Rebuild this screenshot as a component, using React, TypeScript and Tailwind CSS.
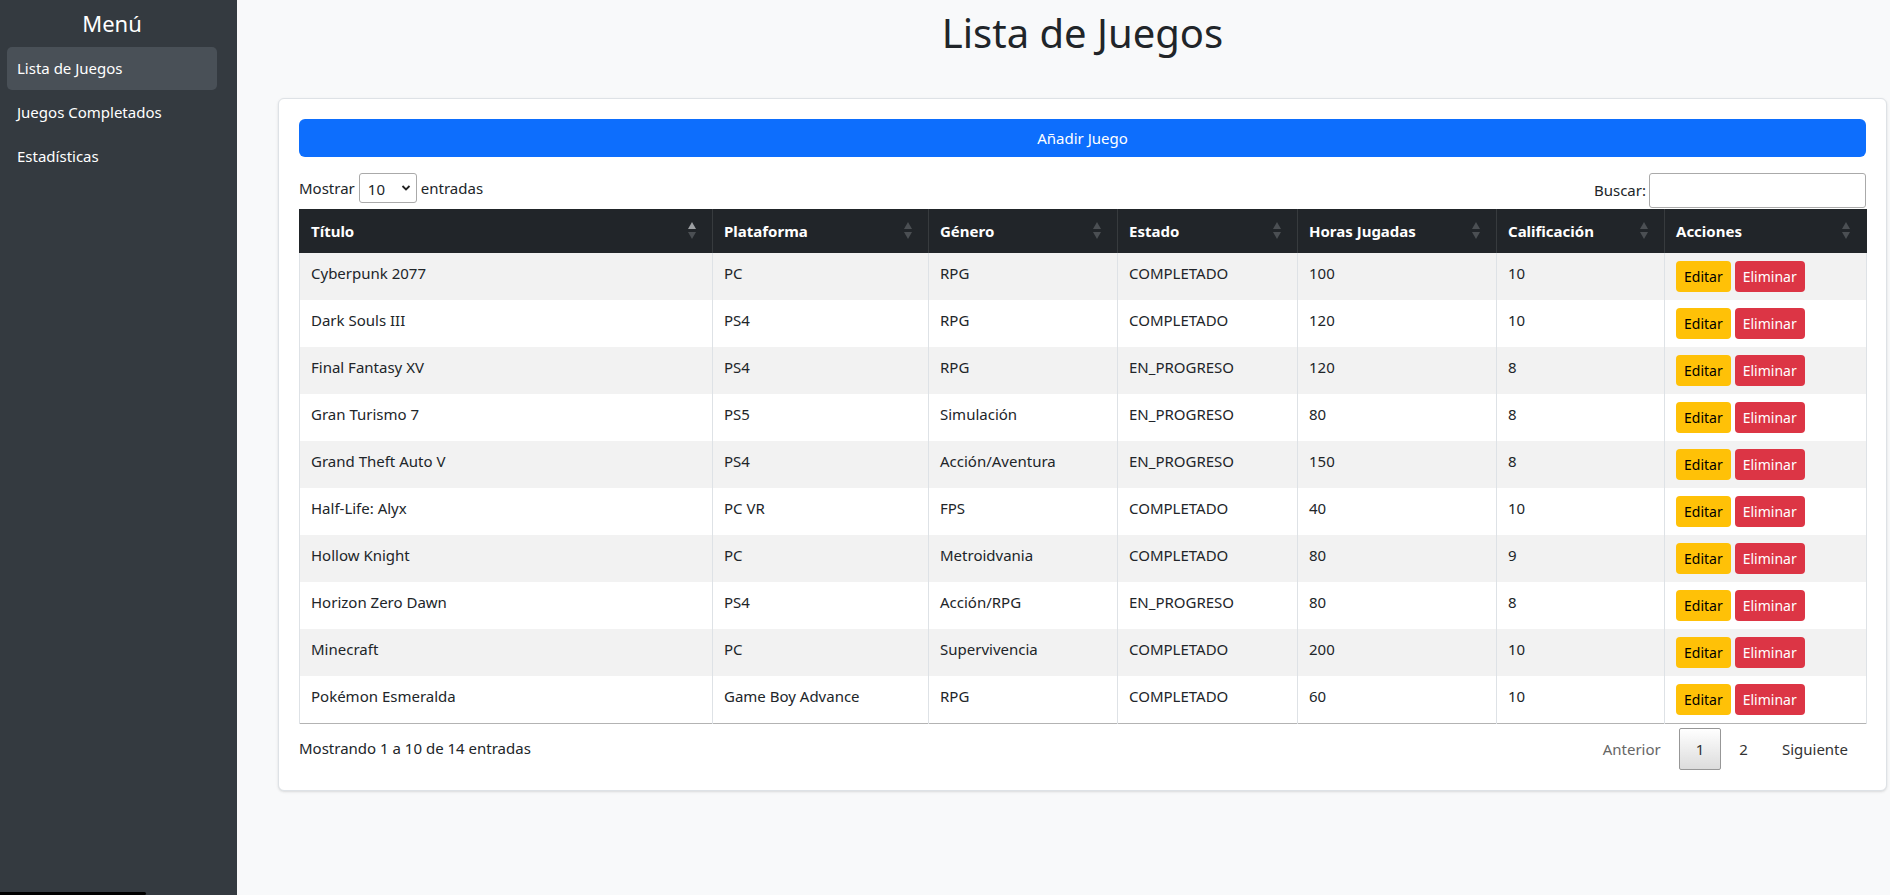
import React from "react";

const games = [
  ["Cyberpunk 2077", "PC", "RPG", "COMPLETADO", "100", "10"],
  ["Dark Souls III", "PS4", "RPG", "COMPLETADO", "120", "10"],
  ["Final Fantasy XV", "PS4", "RPG", "EN_PROGRESO", "120", "8"],
  ["Gran Turismo 7", "PS5", "Simulación", "EN_PROGRESO", "80", "8"],
  ["Grand Theft Auto V", "PS4", "Acción/Aventura", "EN_PROGRESO", "150", "8"],
  ["Half-Life: Alyx", "PC VR", "FPS", "COMPLETADO", "40", "10"],
  ["Hollow Knight", "PC", "Metroidvania", "COMPLETADO", "80", "9"],
  ["Horizon Zero Dawn", "PS4", "Acción/RPG", "EN_PROGRESO", "80", "8"],
  ["Minecraft", "PC", "Supervivencia", "COMPLETADO", "200", "10"],
  ["Pokémon Esmeralda", "Game Boy Advance", "RPG", "COMPLETADO", "60", "10"],
];

const columns = [
  { name: "Título", w: 413 },
  { name: "Plataforma", w: 216 },
  { name: "Género", w: 189 },
  { name: "Estado", w: 180 },
  { name: "Horas Jugadas", w: 199 },
  { name: "Calificación", w: 168 },
  { name: "Acciones", w: 202 },
];

function SortIcon({ active }: { active?: boolean }) {
  return (
    <svg width="8" height="18" viewBox="0 0 8 18" className="shrink-0">
      <polygon points="0,7 4,0 8,7" fill={active ? "#9da0a3" : "#4b4f53"} />
      <polygon points="0,10 8,10 4,17" fill="#4b4f53" />
    </svg>
  );
}

export default function App() {
  return (
    <div className="relative flex h-screen w-full overflow-hidden bg-[#f8f9fa] font-['Noto_Sans',sans-serif] text-[#212529]">
      {/* Sidebar */}
      <aside className="w-[237px] shrink-0 bg-[#343a40] pl-[7px] text-white">
        <div className="w-[210px]">
          <div className="flex h-[47px] items-center justify-center text-[22px]">Menú</div>
          <div className="flex h-[43px] items-center rounded-[5px] bg-[#495057] pl-[10px] text-[15px]">
            Lista de Juegos
          </div>
          <div className="flex h-[44px] items-center pl-[10px] text-[15px]">Juegos Completados</div>
          <div className="flex h-[44px] items-center pl-[10px] text-[15px]">Estadísticas</div>
        </div>
      </aside>

      {/* Main */}
      <main className="min-w-0 flex-1 pl-[41px] pr-[3px] pt-[9px]">
        <h1 className="mb-[41px] h-[48px] text-center text-[40px] leading-[48px]">Lista de Juegos</h1>

        <div className="rounded-md border border-[#dee2e6] bg-white p-[20px] shadow-sm">
          <button className="h-[38px] w-full rounded-md bg-[#0d6efd] text-[15px] text-white">Añadir Juego</button>

          <div className="mt-4 flex h-[36px] items-start justify-between text-[15px]">
            <div className="flex items-center gap-[4px] leading-[30px]">
              <span>Mostrar</span>
              <div className="relative h-[30px] w-[58px]">
                <select className="h-[30px] w-[58px] appearance-none rounded-[3px] border border-[#aaa] bg-white pl-[8px] text-[15px]">
                  <option>10</option>
                </select>
                <svg className="pointer-events-none absolute right-[6px] top-[11px]" width="10" height="8" viewBox="0 0 10 8">
                  <path d="M1.5 2 L5 5.5 L8.5 2" stroke="#222" strokeWidth="1.8" fill="none" />
                </svg>
              </div>
              <span>entradas</span>
            </div>
            <div className="flex items-center gap-[3px]">
              <span>Buscar:</span>
              <input className="h-[35px] w-[217px] rounded-[3px] border border-[#aaa] bg-white" />
            </div>
          </div>

          <table className="w-full table-fixed border-collapse border-b border-[#b3b3b3] text-[15px]">
            <colgroup>
              {columns.map((c) => (
                <col key={c.name} style={{ width: c.w }} />
              ))}
            </colgroup>
            <thead>
              <tr className="bg-[#212529] text-white">
                {columns.map((c, i) => (
                  <th
                    key={c.name}
                    className="h-[44px] border-x border-[#373b3e] px-[11px] text-left font-bold first:border-l-[#212529] last:border-r-[#212529]"
                  >
                    <div className="flex items-center justify-between pr-[5px]">
                      <span>{c.name}</span>
                      <SortIcon active={i === 0} />
                    </div>
                  </th>
                ))}
              </tr>
            </thead>
            <tbody>
              {games.map((g, r) => (
                <tr key={g[0]} className={r % 2 === 0 ? "bg-[#f2f2f2]" : "bg-white"}>
                  {g.map((cell, i) => (
                    <td key={i} className="h-[47px] border-x border-[#dee2e6] px-[11px] pt-[8px] align-top leading-[24px]">
                      {cell}
                    </td>
                  ))}
                  <td className="h-[47px] border-x border-[#dee2e6] px-[11px] align-middle">
                    <div className="flex gap-[4px]">
                      <button className="h-[31px] rounded-[4px] bg-[#ffc107] px-[8px] text-[14px] text-black">Editar</button>
                      <button className="h-[31px] rounded-[4px] bg-[#dc3545] px-[8px] text-[14px] text-white">Eliminar</button>
                    </div>
                  </td>
                </tr>
              ))}
            </tbody>
          </table>

          <div className="mt-[4px] flex items-start justify-between text-[15px]">
            <div className="pt-[8px] leading-[24px]">Mostrando 1 a 10 de 14 entradas</div>
            <div className="flex items-center gap-[2px] pr-[2px]">
              <span className="px-4 leading-[42px] text-[#666]">Anterior</span>
              <span className="h-[42px] rounded-[2px] border border-[#979797] bg-gradient-to-b from-white to-[#dcdcdc] px-4 leading-[40px] text-[#333]">
                1
              </span>
              <span className="px-4 leading-[42px] text-[#333]">2</span>
              <span className="px-4 leading-[42px] text-[#333]">Siguiente</span>
            </div>
          </div>
        </div>
      </main>

      <div className="absolute bottom-0 left-0 h-[3px] w-[146px] rounded-r-sm bg-black" />
    </div>
  );
}
